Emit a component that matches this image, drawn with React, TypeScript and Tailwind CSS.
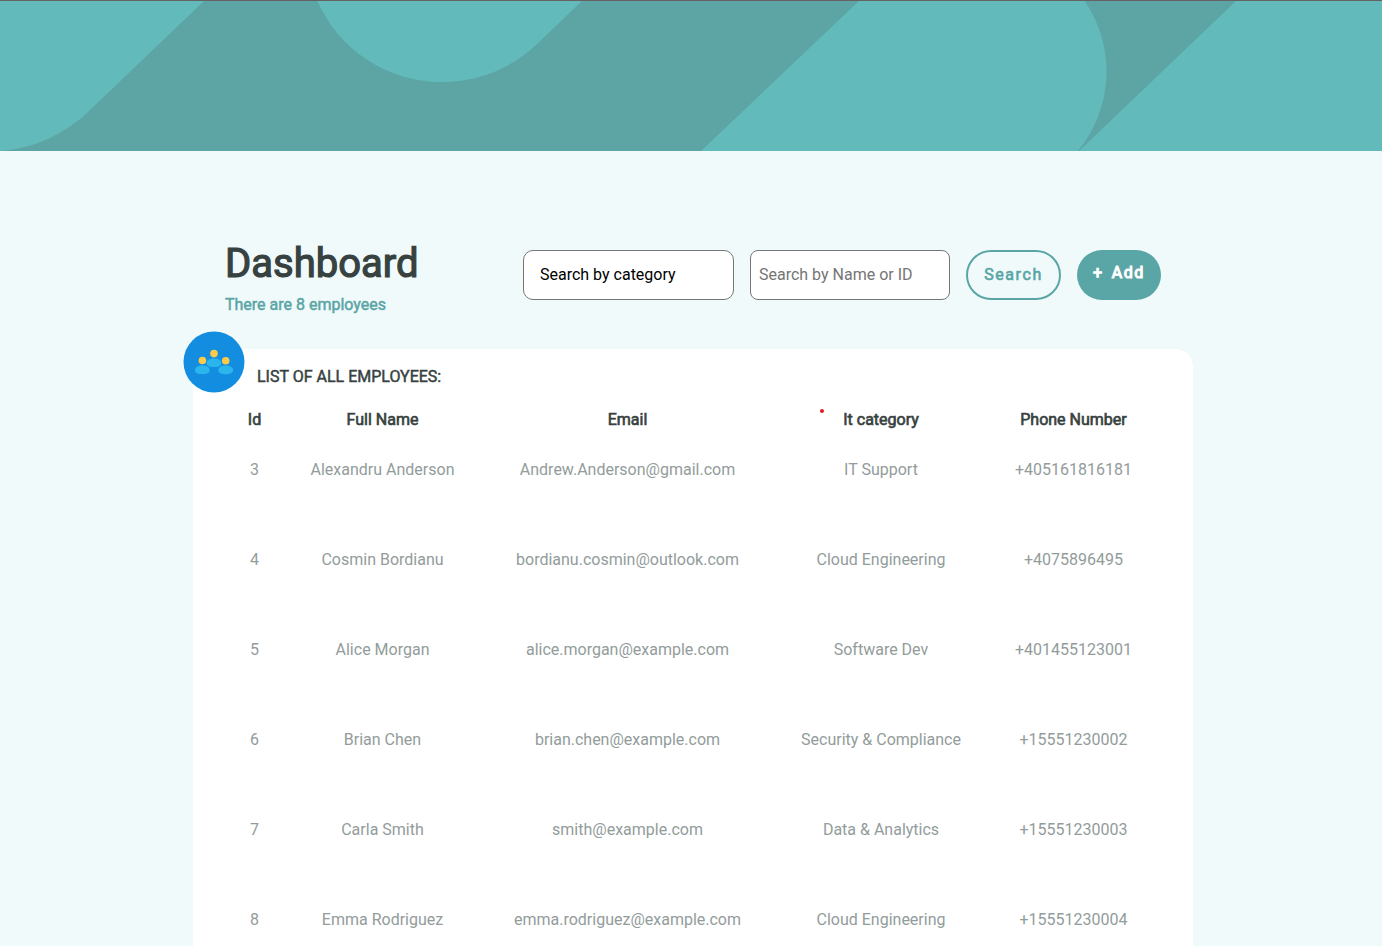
const employees = [
  { id: 3, name: "Alexandru Anderson", email: "Andrew.Anderson@gmail.com", category: "IT Support", phone: "+405161816181" },
  { id: 4, name: "Cosmin Bordianu", email: "bordianu.cosmin@outlook.com", category: "Cloud Engineering", phone: "+4075896495" },
  { id: 5, name: "Alice Morgan", email: "alice.morgan@example.com", category: "Software Dev", phone: "+401455123001" },
  { id: 6, name: "Brian Chen", email: "brian.chen@example.com", category: "Security & Compliance", phone: "+15551230002" },
  { id: 7, name: "Carla Smith", email: "smith@example.com", category: "Data & Analytics", phone: "+15551230003" },
  { id: 8, name: "Emma Rodriguez", email: "emma.rodriguez@example.com", category: "Cloud Engineering", phone: "+15551230004" },
];

function Banner() {
  return (
    <header className="h-[151px] border-t border-[#666264] bg-[#5ca5a4]">
      <svg className="block h-full w-full" viewBox="0 1 1382 150" preserveAspectRatio="none" aria-hidden="true">
        <g fill="#62babb">
          <path d="M0 0H205L87 113Q50 147 0 151Z" />
          <path d="M317 0A135 135 0 0 0 441 82Q496 82 536 45L583 0Z" />
          <path d="M860 0H1084A125 125 0 0 1 1078 151H701Z" />
          <path d="M1237 0H1382V151H1079Z" />
        </g>
      </svg>
    </header>
  );
}

function TeamIcon() {
  return (
    <svg className="absolute -top-[18px] -left-[10px] size-[62px]" viewBox="0 0 62 62" aria-hidden="true">
      <circle cx="31" cy="31" r="30.5" fill="#128ddf" />
      <g fill="#2bb5ed">
        <path d="M23.6 32.4C23.6 29.2 26.5 27.4 31 27.4S38.4 29.2 38.4 32.4C38.4 34.8 35 36 31 36S23.6 34.8 23.6 32.4Z" />
        <path d="M11.9 39.4C11.9 36.2 14.8 34.4 19.3 34.4S26.7 36.2 26.7 39.4C26.7 41.8 23.3 43.1 19.3 43.1S11.9 41.8 11.9 39.4Z" />
        <path d="M35.3 39.6C35.3 36.4 38.2 34.6 42.7 34.6S50.1 36.4 50.1 39.6C50.1 42 46.7 43.3 42.7 43.3S35.3 42 35.3 39.6Z" />
      </g>
      <g fill="#ffca47">
        <circle cx="31" cy="22.6" r="3.8" />
        <circle cx="19.4" cy="29.5" r="3.8" />
        <circle cx="42.7" cy="29.8" r="3.8" />
      </g>
    </svg>
  );
}

export default function App() {
  return (
    <div className="min-h-screen bg-[#f0fafb] font-['Roboto',sans-serif] text-base text-[#374140]">
      <Banner />
      <main className="mx-auto max-w-[1004px] pt-[88px] pl-1">
        <div className="flex items-start justify-between px-8">
          <div>
            <h1 className="pt-px text-[40px] leading-[48px] font-normal [-webkit-text-stroke:0.03em]">Dashboard</h1>
            <p className="mt-[5px] leading-6 [-webkit-text-stroke:0.03em] text-[#5aa5a5]">There are 8 employees</p>
          </div>
          <form className="mt-[11px] flex gap-4" onSubmit={(e) => e.preventDefault()}>
            <select
              aria-label="Search by category"
              className="h-[50px] w-[211px] appearance-none rounded-[10px] border border-[#767676] bg-white px-4 text-black"
            >
              <option>Search by category</option>
              <option>IT Support</option>
              <option>Cloud Engineering</option>
              <option>Software Dev</option>
              <option>Security &amp; Compliance</option>
              <option>Data &amp; Analytics</option>
            </select>
            <input
              type="text"
              aria-label="Search by Name or ID"
              placeholder="Search by Name or ID"
              className="h-[50px] w-[200px] rounded-[8px] border border-[#767676] bg-white px-2 pb-[2px] placeholder:text-[#757575]"
            />
            <button
              type="submit"
              className="h-[50px] w-[95px] rounded-full border-2 border-[#5aa5a5] tracking-widest text-[#5aa5a5] [-webkit-text-stroke:0.04em]"
            >
              Search
            </button>
            <button
              type="button"
              className="flex h-[50px] w-[84px] justify-center gap-2 rounded-full bg-[#5aa5a5] pt-[11px] tracking-widest text-white [-webkit-text-stroke:0.07em]"
            >
              <span>+</span>
              <span>Add</span>
            </button>
          </form>
        </div>

        <section className="relative mt-[32px] rounded-t-[18px] bg-white px-8 pt-4">
          <TeamIcon />
          <h2 className="px-8 leading-6 font-normal [-webkit-text-stroke:0.03em]">LIST OF ALL EMPLOYEES:</h2>
          <div className="relative mt-[15px] pr-[2px]">
            <span className="absolute top-[5px] left-[595px] size-1 rounded-full bg-[#e01b24]" />
            <table className="w-full table-fixed text-center">
              <colgroup>
                <col className="w-[59px]" />
                <col className="w-[197px]" />
                <col className="w-[293px]" />
                <col className="w-[214px]" />
                <col className="w-[171px]" />
              </colgroup>
              <thead>
                <tr className="h-[30px] align-top [-webkit-text-stroke:0.04em]">
                  <th className="py-1 leading-6 font-normal">Id</th>
                  <th className="py-1 leading-6 font-normal">Full Name</th>
                  <th className="py-1 leading-6 font-normal">Email</th>
                  <th className="py-1 leading-6 font-normal">It category</th>
                  <th className="py-1 leading-6 font-normal">Phone Number</th>
                </tr>
              </thead>
              <tbody className="text-[#929c9b]">
                {employees.map((e) => (
                  <tr key={e.id} className="h-[90px] align-top">
                    <td className="pt-[22px]">{e.id}</td>
                    <td className="pt-[22px]">{e.name}</td>
                    <td className="pt-[22px]">{e.email}</td>
                    <td className="pt-[22px]">{e.category}</td>
                    <td className="pt-[22px]">{e.phone}</td>
                  </tr>
                ))}
              </tbody>
            </table>
          </div>
        </section>
      </main>
    </div>
  );
}
